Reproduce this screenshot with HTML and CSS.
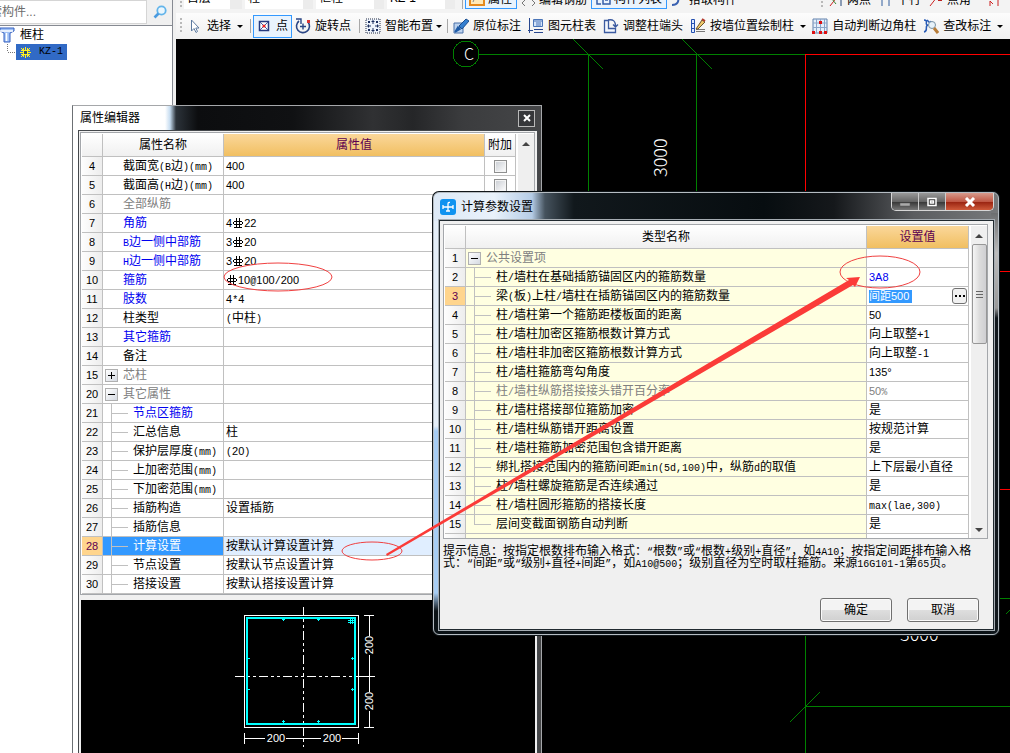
FILE: index.html
```html
<!DOCTYPE html>
<html lang="zh-CN">
<head>
<meta charset="utf-8">
<title>计算参数设置</title>
<link rel="stylesheet" href="styles.css">
</head>
<body>
<svg width="0" height="0" class="defs" aria-hidden="true">
  <symbol id="rebar" viewBox="0 0 12 11"><path d="M2 3.5H10M2 6.5H10M1.5 4V6M10.5 4V6M4.500 0V10M7.500 0V10M2 9.500H10" stroke="#000" fill="none"/></symbol>
</svg>
<div class="app">
  <aside class="side">
    <div class="search">
      <input class="search-input" type="text" aria-label="搜索构件" value="搜索构件...">
      <button class="search-btn" aria-label="搜索"><svg width="14" height="14" viewBox="0 0 14 14"><circle cx="8.500" cy="5.500" r="4.200" fill="#eaf6fd" stroke="#62b4ea" stroke-width="1.800"/><path d="M5.500 8.500L1.500 12.500" stroke="#4a9be0" stroke-width="2.600"/></svg></button>
    </div>
    <ul class="tree">
      <li class="tree-row"><svg width="16" height="18" viewBox="0 0 16 18"><path d="M0 2H14V5L10 7V16H4V7L0 5Z" fill="#9fc0f5" stroke="#3560c0"/><path d="M0 5H13M6.500 7V15" stroke="#fff" stroke-width="1.500"/></svg>框柱</li>
      <li class="tree-row tree-child"><span class="tree-sel"><svg width="11" height="11" viewBox="0 0 11 11"><path d="M3.500 1V10M7.500 1V10M1 3.500H10M1 7.500H10M1 1L10 10M10 1L1 10M5.500 0V11M0 5.500H11" stroke="#ffef20"/><path d="M4 4H7V7H4Z" fill="#2d4f60"/></svg><span class="m">KZ-1</span></span></li>
    </ul>
  </aside>
  <main class="work">
    <div class="bar bar-top">
      <i class="grip"></i>
      <select class="pick pick-s" aria-label="楼层"><option>首层</option></select>
      <select class="pick" aria-label="类型"><option>柱</option></select>
      <select class="pick" aria-label="构件类型"><option>框柱</option></select>
      <select class="pick" aria-label="构件"><option>KZ-1</option></select>
      <i class="sep"></i>
      <button class="tool on"><svg width="16" height="16"><path d="M1 1H15V15H1Z" fill="#ffe9b8" stroke="#e58a1d" stroke-width="2"/><path d="M4 12L7 5L10 10L12 4" stroke="#888" fill="none"/></svg>属性</button>
      <button class="tool"><svg width="16" height="16"><path d="M6 8L2 12L5 15M12 9L15 12L12 15" stroke="#777" fill="none"/></svg>编辑钢筋</button>
      <button class="tool on"><svg width="16" height="16"><path d="M2 8V14H6M8 4H15V14H8ZM10 10H13" stroke="#345ea8" fill="none" stroke-width="1.500"/></svg>构件列表</button>
      <button class="tool"><svg width="16" height="16"><path d="M2 14C8 14 9 10 8 6" stroke="#3960b0" stroke-width="2" fill="none"/></svg>拾取构件</button>
      <span class="bar-gap"></span>
      <i class="grip"></i>
      <button class="tool"><svg width="16" height="16"><path d="M2 15L9 6" stroke="#c22"/><path d="M4 8L8 13" stroke="#383"/><path d="M13 4V15" stroke="#247"/></svg>两点</button>
      <button class="tool"><svg width="16" height="16"><path d="M4 4V15M11 4V15" stroke="#335f9f"/></svg>平行</button>
      <button class="tool"><svg width="16" height="16"><path d="M2 15L9 6" stroke="#c22"/><path d="M10 9H14" stroke="#b22" stroke-width="2"/></svg>点角</button>
      <button class="tool" aria-label="三点辅轴"><svg width="24" height="16"><path d="M12 15V10L15 13M20 5V15" stroke="#c22" fill="none"/></svg></button>
    </div>
    <div class="bar bar-main">
      <i class="grip"></i>
      <button class="tool t-select"><svg width="16" height="16"><path d="M4.500 2V13L7 10.500L9 14.500L10.500 13.500L8.800 10H12Z" fill="#fff" stroke="#5d7ba0"/></svg>选择</button><i class="caret"></i>
      <i class="sep"></i>
      <button class="tool on point"><svg width="12" height="14"><path d="M1.500 2.500H10.500V11.500H1.500Z" fill="#fff" stroke="#263a80" stroke-width="1.500"/><path d="M2 3L10 11M10 3L2 11" stroke="#475aa0"/><circle cx="6" cy="7" r="1.600" fill="#e22"/></svg>点</button>
      <button class="tool"><svg width="16" height="16"><path d="M4 3A6.500 6.500 0 1 0 13 4" fill="none" stroke="#2b4685" stroke-width="1.600"/><path d="M1 1H6V6M5 8.500H11M8 5.500V11.500" fill="none" stroke="#2b4685" stroke-width="1.400"/><path d="M12 2H15V5H12Z" fill="#d33"/></svg>旋转点</button>
      <i class="sep"></i>
      <button class="tool"><svg width="16" height="16"><path d="M1 1H15V15H1Z" fill="#eef4fc" stroke="#202b45" stroke-dasharray="1 1"/><path d="M8 2V6M6.500 3.500H9.500M8 10V14M6.500 12.500H9.500M2 8H6M3.500 6.500V9.500M10 8H14M12.500 6.500V9.500" stroke="#1c2f5f"/><path d="M3 3H5V5H3ZM11 3H13V5H11ZM3 11H5V13H3ZM11 11H13V13H11Z" fill="#1c2f5f"/></svg>智能布置</button><i class="caret tight"></i>
      <i class="sep"></i>
      <button class="tool"><svg width="16" height="16"><path d="M1 5H10V15H1Z" fill="#bcd2ee" stroke="#4a70a8"/><path d="M2 14L5 9L7 11ZM3 13L13 5" stroke="#1f5ca8" stroke-width="1.500"/><path d="M6 8L13 1L16 3L9 11Z" fill="#347fd0" stroke="#1c4f90"/></svg>原位标注</button>
      <button class="tool"><svg width="16" height="16"><path d="M1.500 0V15M0 12.500H5M6 14.500H15M6 11.500H15" stroke="#27468e" fill="none"/><path d="M5.500 1.500H14.500V8.500H5.500Z" fill="#d4e4fa" stroke="#4a75b8"/><path d="M5 3H15M8 5H13M8 7H13" stroke="#4a75b8"/></svg>图元柱表</button>
      <button class="tool"><svg width="16" height="16"><path d="M1.500 2.500H5.500V10.500H12.500V14.500H1.500Z" fill="#f2f6fc" stroke="#3b5aa0" stroke-width="1.300"/><path d="M5 2C10 1 13 3 12.500 9M10 6.500L12.500 9L15 6.500" fill="none" stroke="#3b5aa0" stroke-width="1.300"/></svg>调整柱端头</button>
      <button class="tool"><svg width="16" height="16"><path d="M1.500 1.500H4.500V14.500H1.500ZM1.500 5.500H4.500M1.500 10.500H4.500" fill="#dce9ff" stroke="#2450b0"/><path d="M6 13.500H15M6 11.500H15" stroke="#777"/><path d="M6 11L12 2L15 4L8 11Z" fill="#efc86a" stroke="#6b5630"/><path d="M12 1L15 3" stroke="#b43b2f" stroke-width="2"/></svg>按墙位置绘制柱</button><i class="caret wide"></i>
      <button class="tool"><svg width="16" height="16"><path d="M1 1H15V15H1Z" fill="#e5effb" stroke="#6282ad"/><path d="M4.500 1V15M8.500 1V15M12.500 1V15M1 5H15M1 9.500H15" stroke="#8ba5c8"/><path d="M7 3H10V6H7ZM0 13H3V16H0ZM7 13H10V16H7ZM12 13H15V16H12Z" fill="#d11"/></svg>自动判断边角柱</button>
      <button class="tool"><svg width="16" height="16"><path d="M1 2C6 2 1 7 5 7C1 8 6 13 1 14M4 2L7 5M8 3L6 7" stroke="#285bb5" fill="none" stroke-width="1.500"/><circle cx="9" cy="7" r="3.500" fill="#e7f2fa" stroke="#7992a5"/><path d="M11 10L15 15" stroke="#b77c38" stroke-width="3"/></svg>查改标注</button><i class="caret wide"></i>
    </div>
    <div class="canvas">
      <svg class="cad" width="100%" height="100%">
        <g transform="translate(-176 -39)" fill="none" stroke="#008000" shape-rendering="crispEdges">
          <circle cx="466" cy="54" r="13"/>
          <path d="M479 54.500H805M588.500 54V240M696.500 54V240M573 39L603 69M682 39L712 69M805.500 490V2000M805 706.500H3000M790 722L820 692M980 598.500H3000M1006 614L1024 596"/>
          <path stroke="#f00" d="M805 54.500H3000M805.500 54V489M980 271.500H3000M980 489.500H3000"/>
          <g class="cad-text"><text x="464" y="60" class="cad-c">C</text>
          <text transform="translate(667 177) rotate(-90)">3000</text><text x="900" y="641">3000</text></g>
        </g>
      </svg>
    </div>
  </main>

  <section class="prop">
    <header class="prop-title"><h2>属性编辑器</h2><button class="prop-close" aria-label="关闭"><svg width="8" height="8"><path d="M1 1L7 7M7 1L1 7" stroke="#fff" stroke-width="2"/></svg></button></header>
    <div class="prop-body">
      <div class="grid">
        <table class="tbl prop-tbl">
          <colgroup><col class="c-num"><col class="c-name"><col class="c-val"><col class="c-add"></colgroup>
          <thead><tr><th></th><th>属性名称</th><th class="hot">属性值</th><th>附加</th></tr></thead>
          <tbody>
            <tr><th>4</th><td class="top">截面宽<span class="m">(B</span>边<span class="m">)(mm)</span></td><td>400</td><td class="chk"><input type="checkbox" aria-label="附加截面宽"></td></tr>
            <tr><th>5</th><td class="top">截面高<span class="m">(H</span>边<span class="m">)(mm)</span></td><td>400</td><td class="chk"><input type="checkbox" aria-label="附加截面高"></td></tr>
            <tr><th>6</th><td class="top dim">全部纵筋</td><td></td><td></td></tr>
            <tr><th>7</th><td class="top key">角筋</td><td>4<svg class="rb"><use href="#rebar"/></svg>22</td><td></td></tr>
            <tr><th>8</th><td class="top key"><span class="m">B</span>边一侧中部筋</td><td>3<svg class="rb"><use href="#rebar"/></svg>20</td><td></td></tr>
            <tr><th>9</th><td class="top key"><span class="m">H</span>边一侧中部筋</td><td>3<svg class="rb"><use href="#rebar"/></svg>20</td><td></td></tr>
            <tr><th>10</th><td class="top key">箍筋</td><td><svg class="rb"><use href="#rebar"/></svg>10<span class="m">@</span>100<span class="m">/</span>200</td><td></td></tr>
            <tr><th>11</th><td class="top key">肢数</td><td>4<span class="m">*</span>4</td><td></td></tr>
            <tr><th>12</th><td class="top">柱类型</td><td><span class="m">(</span><span class="zh">中柱</span><span class="m">)</span></td><td></td></tr>
            <tr><th>13</th><td class="top key">其它箍筋</td><td></td><td></td></tr>
            <tr><th>14</th><td class="top">备注</td><td></td><td></td></tr>
            <tr><th>15</th><td class="top dim fold"><button class="tog plus" aria-label="展开"></button>芯柱</td><td></td><td></td></tr>
            <tr><th>20</th><td class="top dim fold"><button class="tog" aria-label="收起"></button>其它属性</td><td></td><td></td></tr>
            <tr><th>21</th><td class="sub key">节点区箍筋</td><td></td><td></td></tr>
            <tr><th>22</th><td class="sub">汇总信息</td><td class="zh">柱</td><td></td></tr>
            <tr><th>23</th><td class="sub">保护层厚度<span class="m">(mm)</span></td><td><span class="m">(</span>20<span class="m">)</span></td><td></td></tr>
            <tr><th>24</th><td class="sub">上加密范围<span class="m">(mm)</span></td><td></td><td></td></tr>
            <tr><th>25</th><td class="sub">下加密范围<span class="m">(mm)</span></td><td></td><td></td></tr>
            <tr><th>26</th><td class="sub">插筋构造</td><td class="zh">设置插筋</td><td></td></tr>
            <tr><th>27</th><td class="sub">插筋信息</td><td></td><td></td></tr>
            <tr class="cur"><th class="hot">28</th><td class="sub">计算设置</td><td class="zh">按默认计算设置计算</td><td></td></tr>
            <tr><th>29</th><td class="sub">节点设置</td><td class="zh">按默认节点设置计算</td><td></td></tr>
            <tr><th>30</th><td class="sub">搭接设置</td><td class="zh">按默认搭接设置计算</td><td></td></tr>
          </tbody>
        </table>
        <div class="scroll"><i class="up"></i></div>
      </div>
      <div class="preview">
        <svg class="section" width="140" height="146" viewBox="235 605 140 146">
          <g fill="none" stroke="#fff" shape-rendering="crispEdges">
            <path d="M244.500 615.500H358.500V727.500H244.500Z"/>
            <path d="M303.500 607V747" stroke-dasharray="9 3 3 3 3 3"/><path d="M235 676.500H375" stroke-dasharray="9 3 3 3 3 3"/>
            <path d="M364 615.500H374M364 727.500H374M358 676.500H375M369.500 615V636M369.500 655V692M369.500 711V727M244.500 733V744M358.500 733V744M244 738.500H265M286 738.500H321M342 738.500H358"/>
            <path d="M247 618H355V724H247Z" stroke="#0ff" stroke-width="2"/>
            <path d="M282 619.500H285M317 619.500H320M282 721.500H285M317 721.500H320M248 658.500H250M248 689.500H250M351 658.500H354M351 689.500H354M348 620.500H354M348 622.500H354M350.500 617V624M352.500 617V624M283.500 619V621M318.500 619V621M283.500 720V723M318.500 720V723M352.500 657V660M352.500 688V691" stroke="#0ff"/>
          </g>
          <g class="dims"><text x="276" y="742">200</text><text x="332" y="742">200</text><text transform="translate(373 645) rotate(-90)">200</text><text transform="translate(373 701) rotate(-90)">200</text></g>
        </svg>
      </div>
    </div>
  </section>

  <section class="dlg" role="dialog" aria-labelledby="dlg-name">
    <header class="dlg-title">
      <svg width="16" height="16" viewBox="0 0 16 16"><path d="M3 0H13Q16 0 16 3V13Q16 16 13 16H3Q0 16 0 13V3Q0 0 3 0Z" fill="#0f93f0"/><path d="M3 8H13M3 6V10M13 6V10M8 12V5Q8 3 10 3.500M6 12H10" stroke="#fff" fill="none" stroke-width="1.300"/></svg>
      <h2 id="dlg-name">计算参数设置</h2>
      <div class="ctl">
        <button class="b-min" aria-label="最小化"><svg width="12" height="10"><path d="M1 6H11V9H1Z" fill="#aaa" stroke="#555" stroke-width=".5"/></svg></button><button class="b-max" aria-label="最大化"><svg width="12" height="10"><path d="M2 1.500H10V8.500H2Z M4.500 4H7.500V6H4.500Z" fill="#333" stroke="#fff" stroke-width="1.500"/></svg></button><button class="b-close" aria-label="关闭"><svg width="12" height="10"><path d="M2 1L10 9M10 1L2 9" stroke="#fff" stroke-width="3"/></svg></button>
      </div>
    </header>
    <div class="dlg-body">
      <div class="grid">
        <table class="tbl dlg-tbl">
          <colgroup><col class="c-num"><col class="c-type"><col class="c-set"></colgroup>
          <thead><tr><th></th><th>类型名称</th><th class="hot">设置值</th></tr></thead>
          <tbody>
            <tr><th>1</th><td class="top dim fold"><button class="tog" aria-label="收起"></button>公共设置项</td><td></td></tr>
            <tr><th>2</th><td class="sub">柱<span class="m">/</span>墙柱在基础插筋锚固区内的箍筋数量</td><td class="key">3A8</td></tr>
            <tr><th class="hot">3</th><td class="sub">梁<span class="m">(</span>板<span class="m">)</span>上柱<span class="m">/</span>墙柱在插筋锚固区内的箍筋数量</td><td><div class="edit"><input type="text" aria-label="设置值" value="间距500"><button aria-label="更多"><i></i><i></i><i></i></button></div></td></tr>
            <tr><th>4</th><td class="sub">柱<span class="m">/</span>墙柱第一个箍筋距楼板面的距离</td><td>50</td></tr>
            <tr><th>5</th><td class="sub">柱<span class="m">/</span>墙柱加密区箍筋根数计算方式</td><td><span class="zh">向上取整</span>+1</td></tr>
            <tr><th>6</th><td class="sub">柱<span class="m">/</span>墙柱非加密区箍筋根数计算方式</td><td><span class="zh">向上取整</span><span class="m">-</span>1</td></tr>
            <tr><th>7</th><td class="sub">柱<span class="m">/</span>墙柱箍筋弯勾角度</td><td>135°</td></tr>
            <tr><th>8</th><td class="sub dim">柱<span class="m">/</span>墙柱纵筋搭接接头错开百分率</td><td class="dim">50<span class="m">%</span></td></tr>
            <tr><th>9</th><td class="sub">柱<span class="m">/</span>墙柱搭接部位箍筋加密</td><td class="zh">是</td></tr>
            <tr><th>10</th><td class="sub">柱<span class="m">/</span>墙柱纵筋错开距离设置</td><td class="zh">按规范计算</td></tr>
            <tr><th>11</th><td class="sub">柱<span class="m">/</span>墙柱箍筋加密范围包含错开距离</td><td class="zh">是</td></tr>
            <tr><th>12</th><td class="sub">绑扎搭接范围内的箍筋间距<span class="m">min(5d,100)</span>中，纵筋<span class="m">d</span>的取值</td><td class="zh">上下层最小直径</td></tr>
            <tr><th>13</th><td class="sub">柱<span class="m">/</span>墙柱螺旋箍筋是否连续通过</td><td class="zh">是</td></tr>
            <tr><th>14</th><td class="sub">柱<span class="m">/</span>墙柱圆形箍筋的搭接长度</td><td><span class="m">max(lae,300)</span></td></tr>
            <tr><th>15</th><td class="sub last">层间变截面钢筋自动判断</td><td class="zh">是</td></tr>
            <tr class="cut"><th></th><td></td><td></td></tr>
          </tbody>
        </table>
        <div class="scroll"><i class="up"></i><div class="thumb"><i></i><i></i><i></i></div><i class="down"></i></div>
      </div>
      <p class="hint">提示信息：按指定根数排布输入格式：<span class="m">“</span>根数<span class="m">”</span>或<span class="m">“</span>根数<span class="m">+</span>级别<span class="m">+</span>直径<span class="m">”</span>，如<span class="m">4A10</span>；按指定间距排布输入格<br>式：<span class="m">“</span>间距<span class="m">”</span>或<span class="m">“</span>级别<span class="m">+</span>直径<span class="m">+</span>间距<span class="m">”</span>，如<span class="m">A10@500</span>；级别直径为空时取柱箍筋。来源<span class="m">16G101-1</span>第<span class="m">65</span>页。</p>
      <footer class="acts"><button class="btn">确定</button><button class="btn">取消</button></footer>
    </div>
  </section>

  <svg class="marks" width="1010" height="753" aria-hidden="true">
    <g fill="none" stroke="#f04040"><ellipse cx="278" cy="277" rx="54" ry="14"/><ellipse cx="372" cy="551" rx="30" ry="9"/><ellipse cx="880" cy="272" rx="40" ry="16"/></g>
    <path d="M386 554L849 280L846 278L860 277L855 287L853 285L387 556Z" fill="#fb3b38"/>
  </svg>
</div>
</body>
</html>
```
FILE: styles.css
```css
* { box-sizing: border-box; }
body { margin: 0; overflow: hidden; font: 12px/18px "Liberation Sans", "Noto Sans CJK SC", sans-serif; color: #000; }
button, input, select { font: inherit; color: inherit; margin: 0; padding: 0; border: 0; background: none; border-radius: 0; }
h2, p, ul { margin: 0; padding: 0; font-size: 12px; font-weight: normal; }
svg { display: block; flex: none; }
.defs { position: absolute; }
.m { font: 10px/1 "Liberation Mono", monospace; }
.app { position: relative; display: flex; height: 100vh; overflow: hidden; }

/* component list */
.side { width: 173px; flex: none; border-right: 1px solid #868a92; background: #fff; }
.search { display: flex; height: 26px; background: #f0f0f0; border-bottom: 1px solid #868a92; padding-bottom: 1px; }
.search-input { flex: 1; min-width: 0; text-indent: -22px; background: #fff; border: 1px solid #d5d5d5; border-left: 0; color: #6c6c6c; }
.search-btn { width: 25px; padding-left: 6px; }
.tree { list-style: none; }
.tree-row { display: flex; align-items: center; gap: 4px; height: 18px; }
.tree-child { height: 16px; padding-left: 16px; background: repeating-linear-gradient(90deg, #777 0 1px, transparent 1px 2px) 8px 8px / 8px 1px no-repeat, repeating-linear-gradient(#777 0 1px, transparent 1px 2px) 7px 0 / 1px 8px no-repeat; }
.tree-sel { display: flex; align-items: center; gap: 8px; width: 51px; height: 16px; padding-left: 4px; background: #316ac5; }

/* toolbars */
.work { flex: 1; min-width: 0; display: flex; flex-direction: column; padding-left: 3px; background: #f0f0f0; }
.bar { display: flex; flex: none; align-items: center; background: linear-gradient(#fcfcfc, #f0f0f0); padding-left: 4px; white-space: nowrap; overflow: hidden; }
.bar-top { height: 13px; align-items: flex-end; padding-bottom: 4px; background: #f3f3f3; }
.bar-main { height: 26px; }
.grip { width: 2px; height: 16px; flex: none; background: repeating-linear-gradient(#b9b9b9 0 2px, transparent 2px 4px); margin-right: 2px; }
.sep { width: 1px; height: 14px; flex: none; background: #a8a8a8; margin: 0 2px 0 4px; }
.caret { flex: none; border: 3px solid transparent; border-top-color: #000; border-bottom: 0; margin: 0 3px; }
.caret.tight { margin-left: -1px; margin-right: 1px; }
.caret.wide { margin: 0 3px 0 2px; }
.tool { display: flex; flex: none; align-items: center; gap: 4px; height: 22px; padding: 0 4px 0 3px; }
.t-select { padding-right: 3px; }
.on { border: 1px solid #3399ff; background: #e9f3fd; }
.point { padding: 0 3px 0 4px; gap: 6px; height: 23px; }
.bar-top .tool { line-height: 14px; align-items: flex-end; gap: 3px; padding-bottom: 2px; }
.pick { appearance: none; width: 68px; height: 20px; margin-right: 3px; padding: 0 0 2px 3px; background: linear-gradient(90deg, #fff 58px, #ececec 58px); }
.pick-s { width: 58px; background: linear-gradient(90deg, #fff 46px, #ececec 46px); }
.bar-gap { flex: none; width: 80px; }
.canvas { flex: 1; min-height: 0; background: #000; }
.cad { overflow: hidden; }
.cad-text { stroke: none; fill: #fff; font: 300 18px "Noto Sans CJK SC", sans-serif; }
.cad-c { font-size: 16px; }

/* grids */
.grid { display: flex; border: 1px solid #a4a7ab; background: #fff; padding: 1px 0 0 1px; }
.tbl { border-collapse: separate; border-spacing: 0; table-layout: fixed; flex: none; }
.tbl th, .tbl td { height: 19px; padding: 0; border: solid #c0c0c0; border-width: 0 1px 1px 0; line-height: 18px; font-weight: normal; white-space: nowrap; overflow: hidden; }
.tbl thead th { height: 23px; background: linear-gradient(#fff, #f0f0f0); }
.tbl tbody th { background: linear-gradient(90deg, #fdfdfd, #ededed); font-size: 11px; }
.tbl td { padding-left: 2px; font-size: 11px; text-align: left; }
.tbl .zh, .tbl .top, .tbl .sub { font-size: 12px; }
.tbl thead .hot { background: linear-gradient(#fad79a, #f1bf61); color: #5c0050; }
.tbl tbody .hot { background: #ffd58d; color: #5c0050; }
.tbl .top { padding-left: 20px; }
.tbl .sub { padding-left: 30px; background-image: linear-gradient(#c0c0c0, #c0c0c0), linear-gradient(#c0c0c0, #c0c0c0); background-size: 1px 19px, 16px 1px; background-position: 8px 0, 9px 9px; background-repeat: no-repeat; }
.tbl .last { background-size: 1px 10px, 16px 1px; }
.tbl .fold { padding-left: 2px; }
.tbl .dim { color: #808080; }
.tbl .key { color: #0000f0; }
.cur .sub { background-color: #3399ff; color: #fff; }
.cur td:not(.sub) { background-color: #e0eeff; }
.tbl .chk { padding: 0; text-align: center; }
.chk input { appearance: none; display: block; width: 13px; height: 13px; margin: 0 auto; border: 1px solid #8e8f8f; background: linear-gradient(135deg, #c8ccd2, #fff); box-shadow: inset 0 0 0 1px #f4f4f4; }
.tog { display: inline-block; vertical-align: middle; width: 13px; height: 13px; margin-right: 5px; border: 1px solid #b0b0b0; background: linear-gradient(#000, #000) 2px 5px / 7px 1px no-repeat, linear-gradient(135deg, #fff, #d5dae2); }
.plus { background: linear-gradient(#000, #000) 2px 5px / 7px 1px no-repeat, linear-gradient(#000, #000) 5px 2px / 1px 7px no-repeat, linear-gradient(135deg, #fff, #d5dae2); }
.rb { display: inline-block; vertical-align: -2px; width: 12px; height: 11px; }
.c-num { width: 21px; }
.c-name { width: 121px; }
.c-val { width: 261px; }
.c-add { width: 31px; }
.c-type { width: 401px; }
.c-set { width: 102px; }
.prop-tbl { width: 434px; }
.dlg-tbl { width: 524px; }
.dlg-tbl .top, .dlg-tbl .sub { background-color: #ffffe1; }
.dlg-tbl .cut th, .dlg-tbl .cut td { height: 4px; border-bottom: 0; }
.dlg-tbl .cut td:nth-child(2) { background: #ffffe1; }
.scroll { flex: 1; display: flex; flex-direction: column; align-items: center; margin-left: 2px; background: #efefef; }
.up, .down { border: 4px solid transparent; border-bottom: 4px solid #444; border-top: 0; margin-top: 8px; }
.down { border-bottom: 0; border-top: 4px solid #444; margin: auto 0 6px; }
.thumb { display: flex; flex-direction: column; justify-content: center; align-items: center; gap: 2px; width: 15px; height: 100px; margin-top: 6px; border: 1px solid #979797; border-radius: 2px; background: linear-gradient(90deg, #f5f5f5, #dcdcdc 50%, #cfcfd2); }
.thumb i { width: 7px; height: 1px; background: #666; }

/* property editor window */
.prop { position: absolute; left: 72px; top: 105px; bottom: 0; width: 470px; display: flex; flex-direction: column; border: 1px solid #a5a7aa; border-left-color: #6c7074; border-bottom: 0; padding: 0 3px 0 5px; background: linear-gradient(90deg, #fff 92px, #c6dcf0 97px, #2c333a 103px, #0c0d0f 125px, #101113 220px, #303133 300px, #252628 340px, #3b3c3e 390px, #454648); }
.prop-title { display: flex; align-items: center; justify-content: space-between; height: 24px; flex: none; padding: 0 3px 0 2px; }
.prop-close { display: flex; align-items: center; justify-content: center; width: 17px; height: 17px; border: 1px solid #b9b9b9; background: #36373a; }
.prop-body { flex: 1; min-height: 0; display: flex; flex-direction: column; border: 1px solid #44484c; border-width: 1px 1px 0 1px; padding: 1px 2px 0 1px; background: #f0f0f0; }
.preview { flex: 1; min-height: 0; margin-top: 5px; background: #000; padding: 5px 0 0 154px; margin-left: 1px; }
.dims { fill: #fff; font: 11px "Liberation Sans", sans-serif; text-anchor: middle; }

/* parameter dialog */
.dlg { position: absolute; left: 433px; top: 192px; width: 566px; border: 1px solid #b5bcc2; border-radius: 6px; padding: 0 4px 4px 5px; box-shadow: 0 0 0 1px #10161a; background:
  linear-gradient(#e4eef8 205px, #a7cdf4 210px, #a7cdf4 372px, #0b1216 390px) 0 28px / 7px 100% no-repeat,
  linear-gradient(#6c6e70, #bcbcbc 40px, #999 95px, #11181d 105px) 100% 20px / 7px 100% no-repeat,
  linear-gradient(90deg, #dde9f6, #e9f2fb 60px, #b5cce6 98px, #45525d 111px, #11181c 140px, #070d10 330px, #15181b 400px, #5b5d60 480px, #77797b 566px) 0 0 / 100% 28px no-repeat,
  #0b1216; }
.dlg-title { display: flex; align-items: center; gap: 5px; height: 27px; padding: 0 0 0 1px; }
.ctl { display: flex; align-self: flex-start; margin-left: auto; height: 18px; border: 1px solid #d6d6d6; border-top: 0; border-radius: 0 0 5px 5px; overflow: hidden; }
.ctl button { display: flex; align-items: center; justify-content: center; height: 100%; border-right: 1px solid #ccc; background: linear-gradient(#999, #666 50%, #333 50%, #777); }
.ctl .b-min, .ctl .b-max { width: 27px; }
.ctl .b-close { width: 47px; border: 0; background: linear-gradient(#d79a8c, #c05845 50%, #96200e 50%, #cf5a3a); }
.dlg-body { border: 1px solid #20292f; box-shadow: 0 0 0 1px #a5acb2; background: #f0f0f0; padding: 3px 5px 7px 3px; }
.edit { display: flex; align-items: center; justify-content: space-between; height: 18px; padding-right: 1px; }
.edit input { width: 43px; height: 13px; background: #3399ff; color: #fff; }
.edit button { display: flex; align-items: center; justify-content: center; gap: 2px; width: 15px; height: 16px; border: 1px solid #707070; border-radius: 3px; background: #f1f1f1; }
.edit button i { width: 2px; height: 2px; background: #000; }
.hint { margin: 6px 0 0; line-height: 12px; white-space: nowrap; }
.hint .m { line-height: 0; }
.acts { display: flex; justify-content: flex-end; gap: 15px; padding: 29px 9px 0 0; }
.btn { width: 72px; height: 24px; border: 1px solid #707070; border-radius: 3px; background: linear-gradient(#f3f3f3 50%, #dedede 50%, #d0d0d0); box-shadow: inset 0 0 0 1px #fafafa; line-height: 20px; }

.marks { position: absolute; left: 0; top: 0; pointer-events: none; }
```
